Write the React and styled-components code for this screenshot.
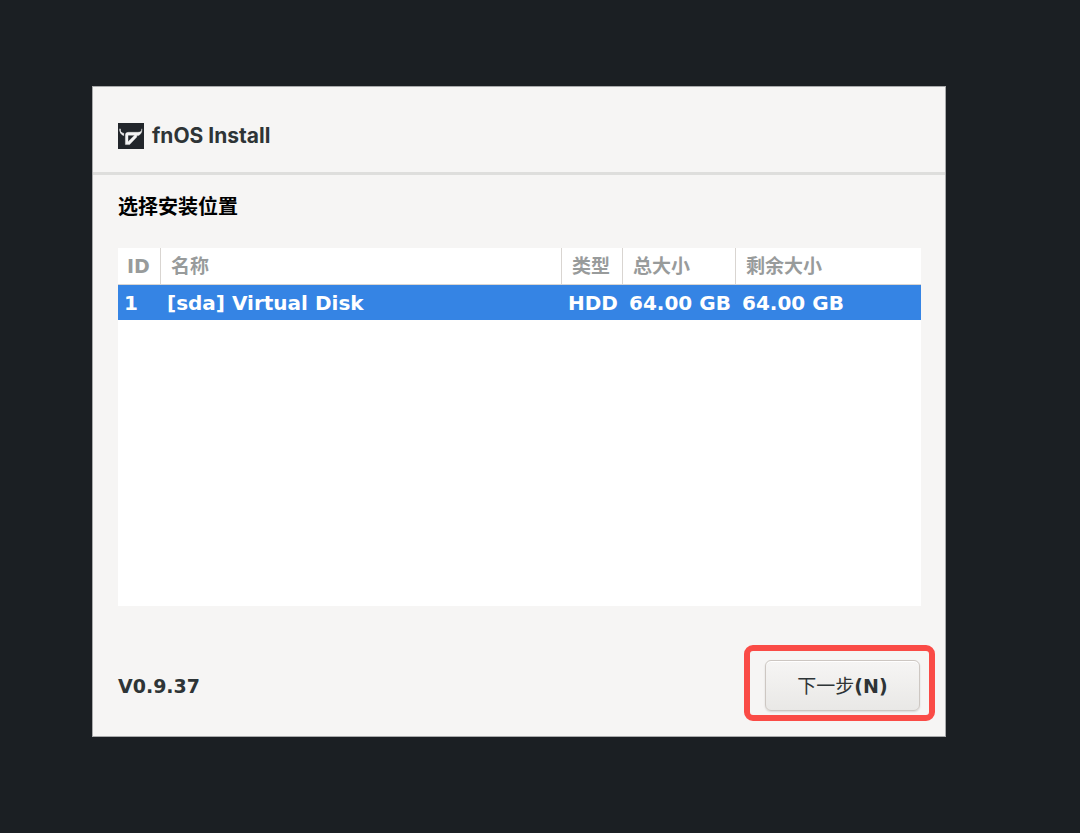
import React from "react";
import styled, { createGlobalStyle } from "styled-components";

const GlobalStyle = createGlobalStyle`
  * { box-sizing: border-box; }
  body {
    margin: 0;
    background: #1b1f23;
    font-family: "DejaVu Sans", "Noto Sans CJK SC", sans-serif;
    font-size: 19px;
    font-weight: 700;
    color: #2e3436;
  }
`;

const Page = styled.main`
  display: flex;
  min-height: 100vh;
  padding: 86px 134px 96px 92px;
`;

const Window = styled.section`
  display: flex;
  flex-direction: column;
  flex: 1;
  min-width: 0;
  background: #f6f5f4;
  border: 1px solid #a9aaab;
`;

const TitleBar = styled.header`
  display: flex;
  align-items: center;
  gap: 8px;
  height: 88px;
  padding: 12px 25px 0;
  border-bottom: 3px solid #dededc;
`;

const Title = styled.h1`
  margin: 0;
  font-family: Inter, sans-serif;
  font-size: 21px;
  font-weight: 700;
  line-height: 26px;
`;

const Content = styled.div`
  display: flex;
  flex-direction: column;
  flex: 1;
  padding: 18px 24px 0 25px;
`;

const Heading = styled.h2`
  margin: 0 0 27px;
  font-size: 20px;
  line-height: 28px;
  color: #000;
`;

const DiskPanel = styled.div`
  flex: 1;
  background: #fff;
`;

const DiskTable = styled.table`
  width: 100%;
  table-layout: fixed;
  border-collapse: separate;
  border-spacing: 0;
  text-align: left;
  white-space: nowrap;
`;

const Column = styled.col`
  width: ${(p) => p.$width || "auto"};
`;

const HeadCell = styled.th`
  height: 37px;
  padding: 0 10px;
  line-height: 28px;
  color: #989b9b;
  border-right: 1px solid #d9d5d1;
  border-bottom: 1px solid #d9d5d1;
  &:first-child { padding: 0 9px; }
  &:last-child { border-right: 0; }
`;

const DiskRow = styled.tr`
  background: ${(p) => (p.$selected ? "#3584e4" : "#fff")};
  color: ${(p) => (p.$selected ? "#fff" : "#2e3436")};
`;

const Cell = styled.td`
  height: 35px;
  padding: 0 6px;
  font-size: 20px;
  line-height: 28px;
`;

const Footer = styled.footer`
  display: flex;
  align-items: center;
  justify-content: space-between;
  padding: 54px 25px 25px;
`;

const Version = styled.span`
  line-height: 28px;
`;

const ButtonSlot = styled.div`
  position: relative;
  display: flex;
`;

const Highlight = styled.span`
  position: absolute;
  inset: -15px -15px -10px -21px;
  border: 6px solid #fa4b46;
  border-radius: 9px;
  pointer-events: none;
`;

const NextButton = styled.button`
  width: 155px;
  height: 51px;
  padding: 0 0 2px;
  font: inherit;
  color: #2e3436;
  background: linear-gradient(#f6f5f4, #e9e8e6);
  border: 1px solid #cdc7c2;
  border-radius: 6px;
  box-shadow: 0 1px 2px rgba(0, 0, 0, 0.12), inset 0 1px #fff;
`;

const Light = styled.span`
  font-weight: 400;
`;

const disks = [
  { id: 1, name: "[sda] Virtual Disk", type: "HDD", total: "64.00 GB", free: "64.00 GB" },
];

function Logo() {
  return (
    <svg width="26" height="26" viewBox="0 0 26 26" aria-hidden="true">
      <rect width="26" height="26" fill="#22262b" />
      <path
        d="M2 5.8C2 8.8 3.2 10 5.6 10.4V12.4C3 11.6 1.6 9.2 2 5.8Z"
        fill="#f4f4f4"
        stroke="#f4f4f4"
        strokeWidth="0.8"
        strokeLinejoin="round"
      />
      <path
        d="M23.8 5.8C23.8 8.4 22.6 9.2 20 9.3H10.2Q7.4 9.3 7.4 12V21.6H11.6L18.8 14V12.4H20.6Q24.4 10.6 23.8 5.8ZM10 12.2H16.6L10 18.8Z"
        fill="#f4f4f4"
        stroke="#f4f4f4"
        strokeWidth="0.4"
        strokeLinejoin="round"
        fillRule="evenodd"
      />
    </svg>
  );
}

export default function App() {
  return (
    <>
      <GlobalStyle />
      <Page>
        <Window>
          <TitleBar>
            <Logo />
            <Title>fnOS Install</Title>
          </TitleBar>
          <Content>
            <Heading>选择安装位置</Heading>
            <DiskPanel>
              <DiskTable>
                <colgroup>
                  <Column $width="43px" />
                  <Column />
                  <Column $width="61px" />
                  <Column $width="113px" />
                  <Column $width="185px" />
                </colgroup>
                <thead>
                  <tr>
                    <HeadCell scope="col">ID</HeadCell>
                    <HeadCell scope="col">名称</HeadCell>
                    <HeadCell scope="col">类型</HeadCell>
                    <HeadCell scope="col">总大小</HeadCell>
                    <HeadCell scope="col">剩余大小</HeadCell>
                  </tr>
                </thead>
                <tbody>
                  {disks.map((disk) => (
                    <DiskRow key={disk.id} $selected={disk.id === 1}>
                      <Cell>{disk.id}</Cell>
                      <Cell>{disk.name}</Cell>
                      <Cell>{disk.type}</Cell>
                      <Cell>{disk.total}</Cell>
                      <Cell>{disk.free}</Cell>
                    </DiskRow>
                  ))}
                </tbody>
              </DiskTable>
            </DiskPanel>
          </Content>
          <Footer>
            <Version>V0.9.37</Version>
            <ButtonSlot>
              <NextButton type="button">
                <Light>下一步</Light>(N)
              </NextButton>
              <Highlight />
            </ButtonSlot>
          </Footer>
        </Window>
      </Page>
    </>
  );
}
